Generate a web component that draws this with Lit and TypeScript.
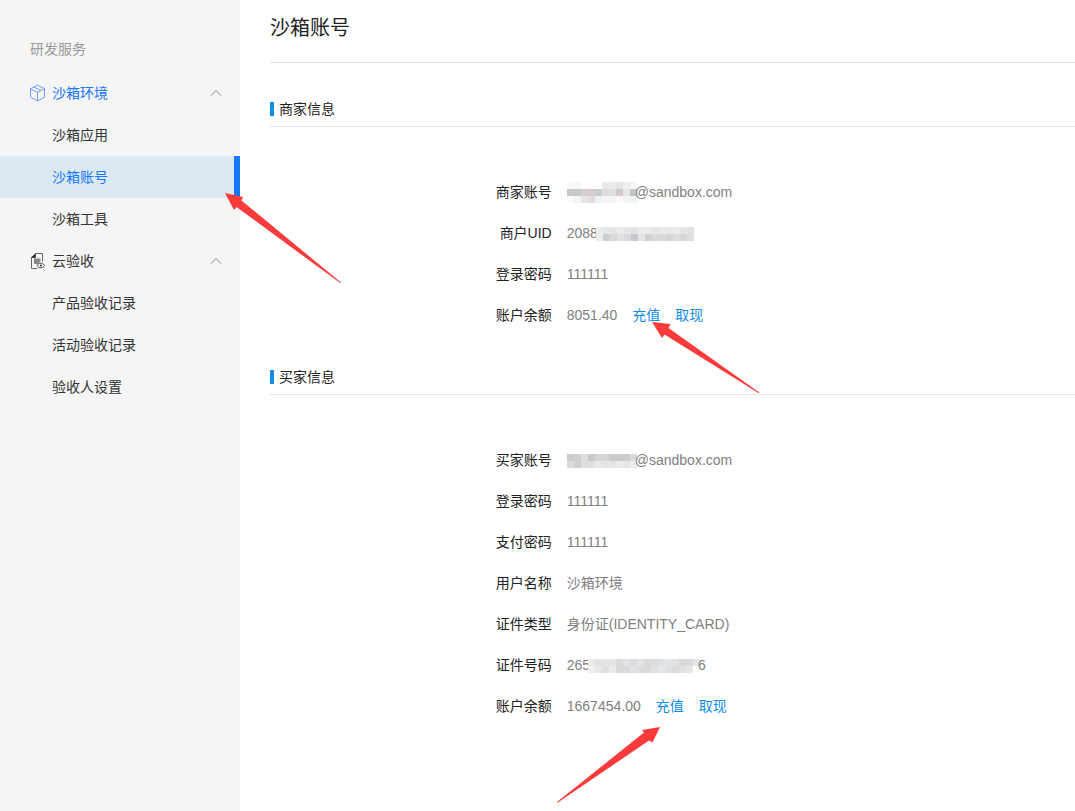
import { LitElement, html, svg, css, nothing } from "lit";
import { customElement, property } from "lit/decorators.js";

const FONT = css`"Liberation Sans", "Noto Sans CJK SC", sans-serif`;
const CELL = 7;

/** Pixelated patch covering private characters; one list of cell colours per row. */
@customElement("mosaic-mask")
class MosaicMask extends LitElement {
  @property({ attribute: false }) rows: string[][] = [];

  static styles = css`
    :host {
      display: block;
      flex: none;
    }
    svg {
      display: block;
    }
  `;

  render() {
    const w = this.rows[0].length * CELL;
    const h = this.rows.length * CELL;
    return html`<svg width=${w} height=${h} shape-rendering="crispEdges" aria-hidden="true">
      ${this.rows.map((row, y) =>
        row.map(
          (c, x) => svg`<rect x=${x * CELL} y=${y * CELL} width=${CELL} height=${CELL} fill=${"#" + c}></rect>`
        )
      )}
    </svg>`;
  }
}

const cells = (...lines: string[]) => lines.map((l) => l.split(" "));

const SELLER_ACCOUNT = cells(
  "f8f8f8 f7f7f7 fff fff fff e9e9ea ebebeb e5e7e7 eeeeef f5f5f5",
  "c9c7c8 c9c7c8 d3d0d1 d5cccb c6ced3 dededf dfe0e0 d2cacb e2e9e6 c5c5c7",
  "fbfbfb f2f3f5 e5e5e5 dfdfe1 f1f4f5 f7f4f4 f5f5f5 fafafa f3f4f3 f3f3f3"
);
const SELLER_UID = cells(
  "ececec e8e8e8 e5e5e5 ebebeb e5e5e7 e1e4e7 eaeaea ececec e6e6e6 ebebec e8e8e8 ebe9ea e5e6e6 e1e1e1",
  "ededed cbd0d5 d9d9da e1e1e1 d9dadb c6c8cd e4e4e4 d3d0d0 dbdbdd d8dadb d5d5d5 dcdcdd d7d6d7 dedfdf"
);
const BUYER_ACCOUNT = cells(
  "cccaca cfcfcf dbdfdf ccc8cb d6d4d5 d3d6d5 cccccd cbcbcb cccccc dadcdc",
  "d9d9d9 cccdcf dededf e1dfdf e9e9e9 e3e4e4 e5e5e4 e9e9e9 e6e7e6 ededed"
);
const BUYER_CARD = cells(
  "e9e9e9 dfe3e5 e5e5e6 e4e4e4 dad9d8 e3e3e4 dcdbd9 e3e3e3 dbdadb dbdcdb e1e0e1 e4e4e4 e3e2e2 d9d9da dcdbdc e1e5e8",
  "f1f1f1 e9e7e8 dedfe0 ebebea d9d9dc d9dae0 e2e1e0 dddcdd d9dadb e1e1e0 e3e7ee dfe0e0 dbdbdc e1e1e1 e7e7e8 fff"
);

interface Field {
  label: string;
  text?: string;
  mask?: string[][];
  tail?: string;
  actions?: boolean;
}

const SELLER: Field[] = [
  { label: "商家账号", mask: SELLER_ACCOUNT, tail: "@sandbox.com" },
  { label: "商户UID", text: "2088", mask: SELLER_UID },
  { label: "登录密码", text: "111111" },
  { label: "账户余额", text: "8051.40", actions: true },
];

const BUYER: Field[] = [
  { label: "买家账号", mask: BUYER_ACCOUNT, tail: "@sandbox.com" },
  { label: "登录密码", text: "111111" },
  { label: "支付密码", text: "111111" },
  { label: "用户名称", text: "沙箱环境" },
  { label: "证件类型", text: "身份证(IDENTITY_CARD)" },
  { label: "证件号码", text: "265", mask: BUYER_CARD, tail: "6" },
  { label: "账户余额", text: "1667454.00", actions: true },
];

@customElement("info-section")
class InfoSection extends LitElement {
  @property() heading = "";
  @property({ attribute: false }) fields: Field[] = [];

  static styles = css`
    :host {
      display: block;
    }
    .heading {
      display: flex;
      align-items: center;
      gap: 5px;
      margin: 0;
      padding-bottom: 7px;
      border-bottom: 1px solid #e5e5e5;
      font: 400 14px/20px ${FONT};
      color: #222;
    }
    .heading::before {
      content: "";
      width: 4px;
      height: 14px;
      background: #108ee9;
    }
    .fields {
      display: grid;
      gap: 20px;
      margin: 0;
      padding: 55px 0 41px;
      font: 400 14px/21px ${FONT};
    }
    .field {
      display: grid;
      grid-template-columns: 35% 1fr;
      column-gap: 15px;
      height: 21px;
    }
    .label {
      text-align: right;
      color: #222;
    }
    .value {
      display: flex;
      align-items: center;
      margin: 0;
      color: #808080;
      white-space: nowrap;
    }
    .tail {
      margin-left: -2px;
    }
    .text + mosaic-mask {
      margin-left: -2px;
    }
    .actions {
      display: flex;
      gap: 15px;
      margin-left: 15px;
    }
    a {
      color: #108ee9;
      text-decoration: none;
    }
  `;

  render() {
    return html`
      <h2 class="heading">${this.heading}</h2>
      <dl class="fields">
        ${this.fields.map(
          (f) => html`<div class="field">
            <dt class="label">${f.label}</dt>
            <dd class="value">
              ${f.text ? html`<span class="text">${f.text}</span>` : nothing}
              ${f.mask ? html`<mosaic-mask .rows=${f.mask}></mosaic-mask>` : nothing}
              ${f.tail ? html`<span class="tail">${f.tail}</span>` : nothing}
              ${f.actions
                ? html`<span class="actions"><a href="#recharge">充值</a><a href="#withdraw">取现</a></span>`
                : nothing}
            </dd>
          </div>`
        )}
      </dl>
    `;
  }
}

const cubeIcon = html`<svg class="icon" width="16" height="18" viewBox="0 0 16 18" fill="none" stroke="#7596ff" stroke-width="1" stroke-linejoin="round" aria-hidden="true">
  <path d="M7.500 1.200 14.500 4.700v8.600l-7 3.500-7-3.500V4.700zM.5 4.700l7 3.600 7-3.600M7.500 8.300v8.500M4 3l7 3.500" />
</svg>`;

const docIcon = html`<svg class="icon" width="16" height="18" viewBox="0 0 16 18" fill="none" aria-hidden="true">
  <path d="M7.500 16.500h-6v-11l4-4h7v8" stroke="#666" />
  <path d="M1 6 5.800 1.200V6z" fill="#333" />
  <path d="M4 6.500h6.500v3L7.500 12H4z" fill="#888" />
  <path d="M7 13.500c1.800-3 5.700-3 7.500 0-1.800 3-5.700 3-7.500 0z" fill="#f5f5f5" stroke="#444" />
  <circle cx="10.800" cy="13.500" r="1" fill="#333" />
</svg>`;

const chevron = html`<svg class="chevron" width="12" height="8" viewBox="0 0 12 8" fill="none" stroke="#b3b6bd" stroke-width="1.3" aria-hidden="true">
  <path d="M1 6.600 6 1.600l5 5" />
</svg>`;

const GROUPS = [
  { name: "沙箱环境", icon: cubeIcon, active: true, items: ["沙箱应用", "沙箱账号", "沙箱工具"] },
  { name: "云验收", icon: docIcon, active: false, items: ["产品验收记录", "活动验收记录", "验收人设置"] },
];

@customElement("side-nav")
class SideNav extends LitElement {
  @property() current = "";

  static styles = css`
    :host {
      display: block;
      box-sizing: border-box;
      padding-top: 26px;
      background: #f5f5f5;
      font: 400 14px/42px ${FONT};
      color: #333;
    }
    .caption {
      margin: 0;
      padding-left: 30px;
      font: inherit;
      line-height: 46px;
      color: #999;
    }
    .group {
      display: flex;
      align-items: center;
      width: 100%;
      height: 42px;
      padding: 0 18px 0 30px;
      border: 0;
      background: none;
      font: inherit;
      color: inherit;
      cursor: pointer;
    }
    .group.active {
      color: #1677ff;
    }
    .icon {
      flex: none;
      margin-right: 6px;
    }
    .chevron {
      margin-left: auto;
    }
    .list {
      margin: 0;
      padding: 0;
      list-style: none;
    }
    .item {
      display: block;
      height: 42px;
      padding-left: 52px;
      color: inherit;
      text-decoration: none;
    }
    .item.current {
      background: #dde9f2;
      border-right: 6px solid #1677ff;
      color: #1677ff;
    }
  `;

  render() {
    return html`<nav>
      <h2 class="caption">研发服务</h2>
      ${GROUPS.map(
        (g) => html`
          <button class="group ${g.active ? "active" : ""}" type="button" aria-expanded="true">
            ${g.icon}<span>${g.name}</span>${chevron}
          </button>
          <ul class="list">
            ${g.items.map(
              (name) => html`<li>
                <a class="item ${name === this.current ? "current" : ""}" href="#">${name}</a>
              </li>`
            )}
          </ul>
        `
      )}
    </nav>`;
  }
}

@customElement("app-root")
class AppRoot extends LitElement {
  static styles = css`
    :host {
      display: grid;
      grid-template-columns: 240px 1fr;
      position: relative;
      min-height: 100vh;
      background: #fff;
      overflow: hidden;
    }
    .main {
      min-width: 0;
      padding-left: 30px;
    }
    .title {
      margin: 0 0 36px;
      padding: 13px 0 19px;
      border-bottom: 1px solid #ddd;
      font: 400 20px/30px ${FONT};
      color: #222;
    }
    .arrows {
      position: absolute;
      top: 0;
      left: 0;
      pointer-events: none;
    }
  `;

  render() {
    return html`
      <side-nav current="沙箱账号"></side-nav>
      <main class="main">
        <h1 class="title">沙箱账号</h1>
        <info-section heading="商家信息" .fields=${SELLER}></info-section>
        <info-section heading="买家信息" .fields=${BUYER}></info-section>
      </main>
      <svg class="arrows" width="800" height="811" viewBox="0 0 800 811" fill="#fb3b3b" aria-hidden="true">
        <path d="M225 193 243 197 241.500 200.500 341 282.500 340.500 283.300 236.500 207 234 210z" />
        <path d="M652 322 670.500 324 668.500 328 759.300 392.500 758.800 393.300 664.500 334.500 662 338z" />
        <path d="M660 727 642 730 644 732.500 557 802 557.500 802.800 649 740.500 652.500 742.500z" />
      </svg>
    `;
  }
}
